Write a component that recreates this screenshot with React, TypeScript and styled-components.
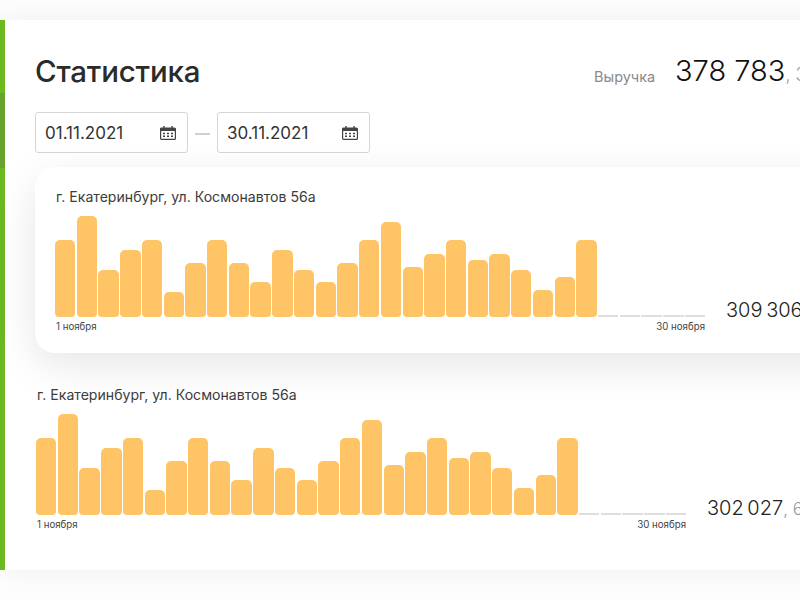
import styled, { createGlobalStyle } from 'styled-components'

const GlobalStyle = createGlobalStyle`
  html, body {
    margin: 0;
    width: 800px;
    height: 600px;
    overflow: hidden;
    background: #fdfdfd;
  }
  * {
    box-sizing: border-box;
  }
`

const Page = styled.div`
  width: 800px;
  height: 600px;
  padding-top: 20px;
  overflow: hidden;
  font-family: 'Inter', 'Noto Sans', sans-serif;
  color: #2b2b2b;
`

const Panel = styled.main`
  position: relative;
  width: 1100px;
  height: 550px;
  background: #fff;
  padding: 31px 0 0 36px;
  box-shadow: 0 0 30px rgba(0, 0, 0, 0.06);
`

const SideStrip = styled.div`
  position: absolute;
  left: 0;
  top: 0;
  bottom: 0;
  width: 4.5px;
  background: linear-gradient(
    #6aba1f 0,
    #6aba1f 73px,
    #68a12c 73px,
    #68a12c 148px,
    #6aba1f 148px
  );
`

const Header = styled.header`
  display: flex;
  align-items: center;
  height: 40px;
`

const Title = styled.h1`
  margin: 0 0 0 -1px;
  width: 559px;
  font-size: 29.5px;
  font-weight: 500;
  letter-spacing: -0.2px;
  line-height: 40px;
`

const RevenueLabel = styled.span`
  width: 81px;
  padding-top: 11px;
  font-size: 14.5px;
  color: #8a8a8a;
`

const RevenueValue = styled.span`
  margin-top: -2px;
  font-size: 29px;
  font-weight: 300;
  color: #111;
  white-space: nowrap;
`

const Kopecks = styled.span`
  font-size: 18px;
  color: #999;
`

const DateRow = styled.div`
  display: flex;
  align-items: center;
  margin-top: 21px;
  margin-left: -1px;
`

const DateField = styled.div`
  display: flex;
  align-items: center;
  justify-content: space-between;
  width: 153px;
  height: 41px;
  padding: 0 11px 0 9px;
  background: #fff;
  border: 1px solid #d6d6d6;
  border-radius: 3px;
  font-size: 17px;
  color: #333;
`

const Dash = styled.span`
  width: 15px;
  height: 2px;
  margin: 2px 7px 0 7px;
  background: #cfcfcf;
`

const StoreCard = styled.section<{ $raised?: boolean }>`
  position: relative;
  display: flex;
  align-items: flex-start;
  width: 1000px;
  height: 186px;
  padding: ${p => (p.$raised ? '20px 0 0 20px' : '20px 0 0 0')};
  margin-top: ${p => (p.$raised ? '14px' : '12px')};
  margin-left: ${p => (p.$raised ? '-1px' : '0')};
  border-radius: 20px 0 0 20px;
  background: ${p => (p.$raised ? '#fff' : 'transparent')};
  box-shadow: ${p => (p.$raised ? '0 12px 40px rgba(0, 0, 0, 0.1)' : 'none')};
`

const ChartColumn = styled.div`
  width: 650px;
`

const StoreName = styled.h2`
  margin: 0 0 8px 1px;
  font-size: 14.1px;
  font-weight: 400;
  line-height: 20px;
  color: #3c3c3c;
`

const Bars = styled.div`
  display: flex;
  align-items: flex-end;
  gap: 1.33px;
  height: 102px;
`

const Bar = styled.div<{ $empty: boolean }>`
  flex: 1;
  border-radius: ${p => (p.$empty ? '0' : '5px 5px 4px 4px')};
  background: ${p => (p.$empty ? '#dedede' : '#fec465')};
`

const Axis = styled.div`
  display: flex;
  justify-content: space-between;
  margin: 3px 0 0 1px;
  font-size: 9.7px;
  line-height: 14px;
  color: #444;
`

const Total = styled.div`
  margin: 111px 0 0 21px;
  font-size: 20px;
  font-weight: 300;
  word-spacing: -2px;
  color: #222;
  white-space: nowrap;
`

const TotalCents = styled.span`
  font-size: 17px;
  word-spacing: 0;
  color: #999;
`

const DAYS = [
  77, 101, 47, 67, 77, 25, 54, 77, 54, 35, 67, 47, 35, 54, 77, 95, 50, 63, 77,
  57, 63, 47, 27, 40, 77, 2, 2, 2, 2, 2
]

function CalendarIcon () {
  return (
    <svg width='16' height='14' viewBox='0 0 16 14' fill='none'>
      <rect x='0.6' y='2' width='14.8' height='11.4' rx='1' fill='#fff' stroke='#444' strokeWidth='1.2' />
      <rect x='0.6' y='2' width='14.8' height='3' fill='#444' />
      <path d='M4 0v3M12 0v3' stroke='#444' strokeWidth='1.4' />
      <path d='M3 6.8h2v1.5H3zM7 6.8h2v1.5H7zM11 6.8h2v1.5h-2zM3 9.6h2v1.5H3zM7 9.6h2v1.5H7zM11 9.6h2v1.5h-2z' fill='#444' />
    </svg>
  )
}

function Store ({ raised, total, cents }: { raised?: boolean, total: string, cents: string }) {
  return (
    <StoreCard $raised={raised}>
      <ChartColumn>
        <StoreName>г. Екатеринбург, ул. Космонавтов 56а</StoreName>
        <Bars>
          {DAYS.map((h, idx) => (
            <Bar key={idx} $empty={h < 3} style={{ height: h }} />
          ))}
        </Bars>
        <Axis>
          <span>1 ноября</span>
          <span>30 ноября</span>
        </Axis>
      </ChartColumn>
      <Total>
        {total}
        <TotalCents>, {cents}</TotalCents>
      </Total>
    </StoreCard>
  )
}

export default function App () {
  return (
    <Page>
      <GlobalStyle />
      <Panel>
        <SideStrip />
        <Header>
          <Title>Статистика</Title>
          <RevenueLabel>Выручка</RevenueLabel>
          <RevenueValue>
            378 783<Kopecks>, 30 ₽</Kopecks>
          </RevenueValue>
        </Header>
        <DateRow>
          <DateField>
            01.11.2021
            <CalendarIcon />
          </DateField>
          <Dash />
          <DateField>
            30.11.2021
            <CalendarIcon />
          </DateField>
        </DateRow>
        <Store raised total='309 306' cents='67 ₽' />
        <Store total='302 027' cents='67 ₽' />
      </Panel>
    </Page>
  )
}
